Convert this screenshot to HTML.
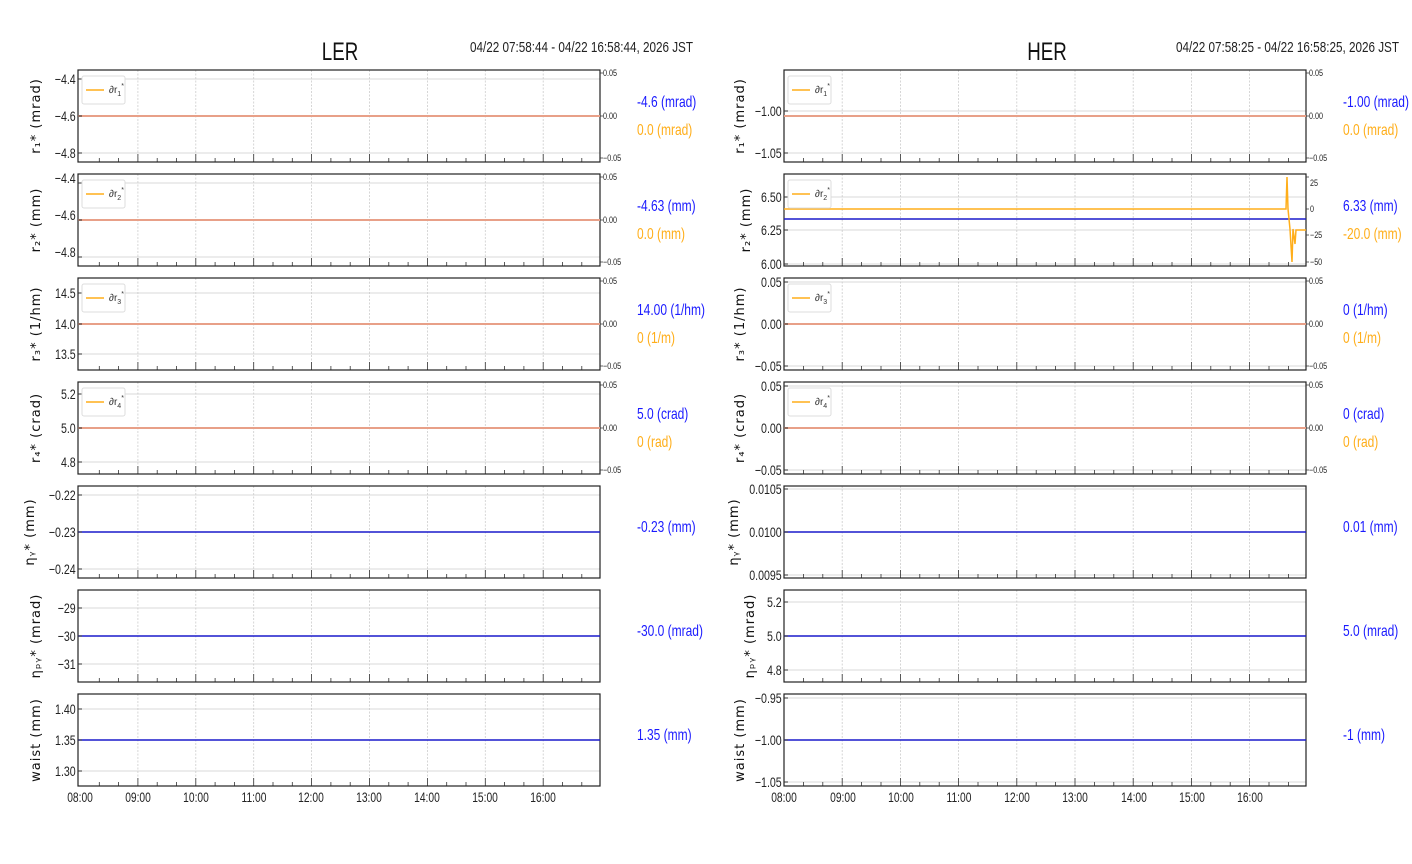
<!DOCTYPE html>
<html><head><meta charset="utf-8"><style>
html,body{margin:0;padding:0;background:#fff;width:1412px;height:864px;overflow:hidden}
svg{display:block}
.t{font-family:"Liberation Sans",sans-serif;font-size:14px;fill:#222;transform:scale(.76,1)}
.tt{font-family:"Liberation Sans",sans-serif;font-size:13.5px;fill:#222}
.s{font-family:"Liberation Sans",sans-serif;font-size:9px;fill:#222}
.yl{font-family:"DejaVu Sans",sans-serif;font-size:13px;fill:#111;letter-spacing:1px}
.b{font-family:"Liberation Sans",sans-serif;font-size:16px;fill:#1a1aff}
.o{font-family:"Liberation Sans",sans-serif;font-size:16px;fill:#ffae1a}
.lg{font-family:"Liberation Sans",sans-serif;font-size:10px;fill:#333}
</style></head><body>
<svg width="1412" height="864" viewBox="0 0 1412 864" xmlns="http://www.w3.org/2000/svg">
<defs>
<g id="gl">
<path d="M59.9 0V92M117.8 0V92M175.7 0V92M233.6 0V92M291.5 0V92M349.4 0V92M407.3 0V92M465.2 0V92" stroke="#ccc" stroke-width="0.8" stroke-dasharray="2,1.5"/>
<path d="M21.3 92v-4M40.6 92v-4M79.2 92v-4M98.5 92v-4M137.1 92v-4M156.4 92v-4M195 92v-4M214.3 92v-4M252.9 92v-4M272.2 92v-4M310.8 92v-4M330.1 92v-4M368.7 92v-4M388 92v-4M426.6 92v-4M445.9 92v-4M484.5 92v-4M503.8 92v-4M59.9 92v-8M117.8 92v-8M175.7 92v-8M233.6 92v-8M291.5 92v-8M349.4 92v-8M407.3 92v-8M465.2 92v-8" stroke="#333" stroke-width="0.8"/>
<rect x="0" y="0" width="522" height="92" fill="none" stroke="#222" stroke-width="1.2"/>
</g>
<g id="gr">
<path d="M58.2 0V92M116.4 0V92M174.6 0V92M232.8 0V92M291 0V92M349.2 0V92M407.4 0V92M465.6 0V92" stroke="#ccc" stroke-width="0.8" stroke-dasharray="2,1.5"/>
<path d="M19.4 92v-4M38.8 92v-4M77.6 92v-4M97 92v-4M135.8 92v-4M155.2 92v-4M194 92v-4M213.4 92v-4M252.2 92v-4M271.6 92v-4M310.4 92v-4M329.8 92v-4M368.6 92v-4M388 92v-4M426.8 92v-4M446.2 92v-4M485 92v-4M504.4 92v-4M58.2 92v-8M116.4 92v-8M174.6 92v-8M232.8 92v-8M291 92v-8M349.2 92v-8M407.4 92v-8M465.6 92v-8" stroke="#333" stroke-width="0.8"/>
<rect x="0" y="0" width="522" height="92" fill="none" stroke="#222" stroke-width="1.2"/>
</g>
<g id="tw">
<path d="M522 3h3M522 46h3M522 88h3" stroke="#333" stroke-width="0.8"/>
<g transform="translate(525,0) scale(.8,1)"><text class="s" x="0" y="6">0.05</text><text class="s" x="0" y="49">0.00</text><text class="s" x="0" y="91">−0.05</text></g>
</g>
<g id="lgb"><rect x="4" y="6" width="43" height="28" rx="2" fill="#fff" stroke="#ddd"/><path d="M8 20h18" stroke="#ffae1a" stroke-width="1.5"/></g>
</defs>

<g transform="translate(340,60) scale(.75,1)"><text x="0" y="0" text-anchor="middle" style="font-family:'Liberation Sans',sans-serif;font-size:25px" fill="#111">LER</text></g>
<text x="470" y="52" class="tt" style="font-size:15px" textLength="223" lengthAdjust="spacingAndGlyphs">04/22 07:58:44 - 04/22 16:58:44, 2026 JST</text>
<g transform="translate(1047,60) scale(.75,1)"><text x="0" y="0" text-anchor="middle" style="font-family:'Liberation Sans',sans-serif;font-size:25px" fill="#111">HER</text></g>
<text x="1176" y="52" class="tt" style="font-size:15px" textLength="223" lengthAdjust="spacingAndGlyphs">04/22 07:58:25 - 04/22 16:58:25, 2026 JST</text>

<!-- LEFT -->
<g transform="translate(78,70)"><path d="M0 9H522M0 46H522M0 83H522" stroke="#ccc" stroke-width="0.8"/><use href="#gl"/><use href="#tw"/><path d="M0 46H522" stroke="#e8a088" stroke-width="2"/><path d="M0 9h4M0 46h4M0 83h4" stroke="#333"/>
<text class="t" x="-3" y="14" text-anchor="end">−4.4</text><text class="t" x="-3" y="51" text-anchor="end">−4.6</text><text class="t" x="-3" y="88" text-anchor="end">−4.8</text>
<use href="#lgb"/><text class="lg" x="31" y="23">∂r<tspan font-size="7" dy="3">1</tspan><tspan font-size="7" dy="-8">*</tspan></text>
<text class="yl" transform="translate(-38,46) rotate(-90)" text-anchor="middle">r₁* (mrad)</text></g>

<g transform="translate(78,174)"><path d="M0 9H522M0 46H522M0 83H522" stroke="#ccc" stroke-width="0.8"/><use href="#gl"/><use href="#tw"/><path d="M0 46H522" stroke="#e8a088" stroke-width="2"/><path d="M0 9h4M0 46h4M0 83h4" stroke="#333"/>
<text class="t" x="-3" y="9" text-anchor="end">−4.4</text><text class="t" x="-3" y="46" text-anchor="end">−4.6</text><text class="t" x="-3" y="83" text-anchor="end">−4.8</text>
<use href="#lgb"/><text class="lg" x="31" y="23">∂r<tspan font-size="7" dy="3">2</tspan><tspan font-size="7" dy="-8">*</tspan></text>
<text class="yl" transform="translate(-38,46) rotate(-90)" text-anchor="middle">r₂* (mm)</text></g>

<g transform="translate(78,278)"><path d="M0 15H522M0 46H522M0 76H522" stroke="#ccc" stroke-width="0.8"/><use href="#gl"/><use href="#tw"/><path d="M0 46H522" stroke="#e8a088" stroke-width="2"/><path d="M0 15h4M0 46h4M0 76h4" stroke="#333"/>
<text class="t" x="-3" y="20" text-anchor="end">14.5</text><text class="t" x="-3" y="51" text-anchor="end">14.0</text><text class="t" x="-3" y="81" text-anchor="end">13.5</text>
<use href="#lgb"/><text class="lg" x="31" y="23">∂r<tspan font-size="7" dy="3">3</tspan><tspan font-size="7" dy="-8">*</tspan></text>
<text class="yl" transform="translate(-38,46) rotate(-90)" text-anchor="middle">r₃* (1/hm)</text></g>

<g transform="translate(78,382)"><path d="M0 12H522M0 46H522M0 80H522" stroke="#ccc" stroke-width="0.8"/><use href="#gl"/><use href="#tw"/><path d="M0 46H522" stroke="#e8a088" stroke-width="2"/><path d="M0 12h4M0 46h4M0 80h4" stroke="#333"/>
<text class="t" x="-3" y="17" text-anchor="end">5.2</text><text class="t" x="-3" y="51" text-anchor="end">5.0</text><text class="t" x="-3" y="85" text-anchor="end">4.8</text>
<use href="#lgb"/><text class="lg" x="31" y="23">∂r<tspan font-size="7" dy="3">4</tspan><tspan font-size="7" dy="-8">*</tspan></text>
<text class="yl" transform="translate(-38,46) rotate(-90)" text-anchor="middle">r₄* (crad)</text></g>

<g transform="translate(78,486)"><path d="M0 9H522M0 46H522M0 83H522" stroke="#ccc" stroke-width="0.8"/><use href="#gl"/><path d="M0 46H522" stroke="#1a1acc" stroke-width="1.6"/><path d="M0 9h4M0 46h4M0 83h4" stroke="#333"/>
<text class="t" x="-3" y="14" text-anchor="end">−0.22</text><text class="t" x="-3" y="51" text-anchor="end">−0.23</text><text class="t" x="-3" y="88" text-anchor="end">−0.24</text>
<text class="yl" transform="translate(-44,46) rotate(-90)" text-anchor="middle">ηᵧ* (mm)</text></g>

<g transform="translate(78,590)"><path d="M0 18H522M0 46H522M0 74H522" stroke="#ccc" stroke-width="0.8"/><use href="#gl"/><path d="M0 46H522" stroke="#1a1acc" stroke-width="1.6"/><path d="M0 18h4M0 46h4M0 74h4" stroke="#333"/>
<text class="t" x="-3" y="23" text-anchor="end">−29</text><text class="t" x="-3" y="51" text-anchor="end">−30</text><text class="t" x="-3" y="79" text-anchor="end">−31</text>
<text class="yl" transform="translate(-38,46) rotate(-90)" text-anchor="middle">ηₚᵧ* (mrad)</text></g>

<g transform="translate(78,694)"><path d="M0 15H522M0 46H522M0 77H522" stroke="#ccc" stroke-width="0.8"/><use href="#gl"/><path d="M0 46H522" stroke="#1a1acc" stroke-width="1.6"/><path d="M0 15h4M0 46h4M0 77h4" stroke="#333"/>
<text class="t" x="-3" y="20" text-anchor="end">1.40</text><text class="t" x="-3" y="51" text-anchor="end">1.35</text><text class="t" x="-3" y="82" text-anchor="end">1.30</text>
<text class="yl" transform="translate(-38,46) rotate(-90)" text-anchor="middle">waist (mm)</text></g>

<g transform="translate(637,0) scale(.75,1)">
<text class="b" x="0" y="107">-4.6 (mrad)</text><text class="o" x="0" y="135">0.0 (mrad)</text>
<text class="b" x="0" y="211">-4.63 (mm)</text><text class="o" x="0" y="239">0.0 (mm)</text>
<text class="b" x="0" y="315">14.00 (1/hm)</text><text class="o" x="0" y="343">0 (1/m)</text>
<text class="b" x="0" y="419">5.0 (crad)</text><text class="o" x="0" y="447">0 (rad)</text>
<text class="b" x="0" y="532">-0.23 (mm)</text>
<text class="b" x="0" y="636">-30.0 (mrad)</text>
<text class="b" x="0" y="740">1.35 (mm)</text>
</g>

<g class="tt" text-anchor="middle" transform="scale(.76,1)">
<text x="105.3" y="802">08:00</text><text x="181.6" y="802">09:00</text><text x="257.9" y="802">10:00</text><text x="334.2" y="802">11:00</text><text x="409.2" y="802">12:00</text><text x="485.5" y="802">13:00</text><text x="561.8" y="802">14:00</text><text x="638.2" y="802">15:00</text><text x="714.5" y="802">16:00</text>
<text x="1031.6" y="802">08:00</text><text x="1109.2" y="802">09:00</text><text x="1185.5" y="802">10:00</text><text x="1261.8" y="802">11:00</text><text x="1338.2" y="802">12:00</text><text x="1414.5" y="802">13:00</text><text x="1492.1" y="802">14:00</text><text x="1568.4" y="802">15:00</text><text x="1644.7" y="802">16:00</text>
</g>

<!-- RIGHT -->
<g transform="translate(784,70)"><path d="M0 41H522M0 83H522" stroke="#ccc" stroke-width="0.8"/><use href="#gr"/><use href="#tw"/><path d="M0 46H522" stroke="#e8a088" stroke-width="2"/><path d="M0 41h4M0 83h4" stroke="#333"/>
<text class="t" x="-3" y="46" text-anchor="end">−1.00</text><text class="t" x="-3" y="88" text-anchor="end">−1.05</text>
<use href="#lgb"/><text class="lg" x="31" y="23">∂r<tspan font-size="7" dy="3">1</tspan><tspan font-size="7" dy="-8">*</tspan></text>
<text class="yl" transform="translate(-40,46) rotate(-90)" text-anchor="middle">r₁* (mrad)</text></g>

<g transform="translate(784,174)"><path d="M0 23H522M0 56H522M0 90H522" stroke="#ccc" stroke-width="0.8"/><use href="#gr"/>
<path d="M522 3h3M522 35h3M522 61h3M522 88h3" stroke="#333" stroke-width="0.8"/>
<g transform="translate(526,0) scale(.8,1)"><text class="s" x="0" y="12">25</text><text class="s" x="0" y="38">0</text><text class="s" x="0" y="64">−25</text><text class="s" x="0" y="91">−50</text></g>
<path d="M0 45H522" stroke="#1a1acc" stroke-width="1.6"/>
<path d="M0 35H502L503 3L504 35L506 55L508 88L509 55L511 70L512 56H522" stroke="#ffae1a" stroke-width="1.5" fill="none"/>
<path d="M0 23h4M0 56h4M0 90h4" stroke="#333"/>
<text class="t" x="-3" y="28" text-anchor="end">6.50</text><text class="t" x="-3" y="61" text-anchor="end">6.25</text><text class="t" x="-3" y="95" text-anchor="end">6.00</text>
<use href="#lgb"/><text class="lg" x="31" y="23">∂r<tspan font-size="7" dy="3">2</tspan><tspan font-size="7" dy="-8">*</tspan></text>
<text class="yl" transform="translate(-34,46) rotate(-90)" text-anchor="middle">r₂* (mm)</text></g>

<g transform="translate(784,278)"><path d="M0 4H522M0 46H522M0 88H522" stroke="#ccc" stroke-width="0.8"/><use href="#gr"/><use href="#tw"/><path d="M0 46H522" stroke="#e8a088" stroke-width="2"/><path d="M0 4h4M0 46h4M0 88h4" stroke="#333"/>
<text class="t" x="-3" y="9" text-anchor="end">0.05</text><text class="t" x="-3" y="51" text-anchor="end">0.00</text><text class="t" x="-3" y="93" text-anchor="end">−0.05</text>
<use href="#lgb"/><text class="lg" x="31" y="23">∂r<tspan font-size="7" dy="3">3</tspan><tspan font-size="7" dy="-8">*</tspan></text>
<text class="yl" transform="translate(-40,46) rotate(-90)" text-anchor="middle">r₃* (1/hm)</text></g>

<g transform="translate(784,382)"><path d="M0 4H522M0 46H522M0 88H522" stroke="#ccc" stroke-width="0.8"/><use href="#gr"/><use href="#tw"/><path d="M0 46H522" stroke="#e8a088" stroke-width="2"/><path d="M0 4h4M0 46h4M0 88h4" stroke="#333"/>
<text class="t" x="-3" y="9" text-anchor="end">0.05</text><text class="t" x="-3" y="51" text-anchor="end">0.00</text><text class="t" x="-3" y="93" text-anchor="end">−0.05</text>
<use href="#lgb"/><text class="lg" x="31" y="23">∂r<tspan font-size="7" dy="3">4</tspan><tspan font-size="7" dy="-8">*</tspan></text>
<text class="yl" transform="translate(-40,46) rotate(-90)" text-anchor="middle">r₄* (crad)</text></g>

<g transform="translate(784,486)"><path d="M0 3H522M0 46H522M0 89H522" stroke="#ccc" stroke-width="0.8"/><use href="#gr"/><path d="M0 46H522" stroke="#1a1acc" stroke-width="1.6"/><path d="M0 3h4M0 46h4M0 89h4" stroke="#333"/>
<text class="t" x="-3" y="8" text-anchor="end">0.0105</text><text class="t" x="-3" y="51" text-anchor="end">0.0100</text><text class="t" x="-3" y="94" text-anchor="end">0.0095</text>
<text class="yl" transform="translate(-46,46) rotate(-90)" text-anchor="middle">ηᵧ* (mm)</text></g>

<g transform="translate(784,590)"><path d="M0 12H522M0 46H522M0 80H522" stroke="#ccc" stroke-width="0.8"/><use href="#gr"/><path d="M0 46H522" stroke="#1a1acc" stroke-width="1.6"/><path d="M0 12h4M0 46h4M0 80h4" stroke="#333"/>
<text class="t" x="-3" y="17" text-anchor="end">5.2</text><text class="t" x="-3" y="51" text-anchor="end">5.0</text><text class="t" x="-3" y="85" text-anchor="end">4.8</text>
<text class="yl" transform="translate(-30,46) rotate(-90)" text-anchor="middle">ηₚᵧ* (mrad)</text></g>

<g transform="translate(784,694)"><path d="M0 4H522M0 46H522M0 88H522" stroke="#ccc" stroke-width="0.8"/><use href="#gr"/><path d="M0 46H522" stroke="#1a1acc" stroke-width="1.6"/><path d="M0 4h4M0 46h4M0 88h4" stroke="#333"/>
<text class="t" x="-3" y="9" text-anchor="end">−0.95</text><text class="t" x="-3" y="51" text-anchor="end">−1.00</text><text class="t" x="-3" y="93" text-anchor="end">−1.05</text>
<text class="yl" transform="translate(-40,46) rotate(-90)" text-anchor="middle">waist (mm)</text></g>

<g transform="translate(1343,0) scale(.75,1)">
<text class="b" x="0" y="107">-1.00 (mrad)</text><text class="o" x="0" y="135">0.0 (mrad)</text>
<text class="b" x="0" y="211">6.33 (mm)</text><text class="o" x="0" y="239">-20.0 (mm)</text>
<text class="b" x="0" y="315">0 (1/hm)</text><text class="o" x="0" y="343">0 (1/m)</text>
<text class="b" x="0" y="419">0 (crad)</text><text class="o" x="0" y="447">0 (rad)</text>
<text class="b" x="0" y="532">0.01 (mm)</text>
<text class="b" x="0" y="636">5.0 (mrad)</text>
<text class="b" x="0" y="740">-1 (mm)</text>
</g>
</svg>
</body></html>
